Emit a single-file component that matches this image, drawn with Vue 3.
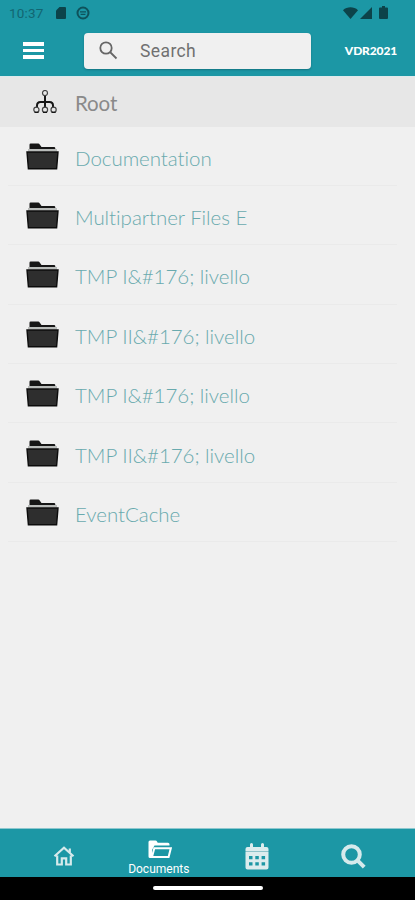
<template>
  <div class="screen">
    <header class="top">
      <div class="status">
        <span class="time">10:37</span>
        <svg class="sd" viewBox="0 0 10 12">
          <path d="M3.5 0H9a1 1 0 0 1 1 1v10a1 1 0 0 1-1 1H1a1 1 0 0 1-1-1V3.5z" />
        </svg>
        <svg class="sync" viewBox="0 0 14 14">
          <circle cx="7" cy="7" r="5.5" />
          <path d="M4 5.8h6M4.6 8.4h4.8" />
        </svg>
        <div class="signals">
          <svg width="15" height="12" viewBox="0 0 15 12">
            <path d="M7.5 12L0 3.2C4.2-.6 10.8-.6 15 3.2z" />
          </svg>
          <svg width="12" height="12" viewBox="0 0 12 12">
            <path d="M12 0v12H0z" />
          </svg>
          <svg class="battery" width="9" height="13" viewBox="0 0 9 13">
            <path d="M3 0h3v1.5h2a1 1 0 0 1 1 1V12a1 1 0 0 1-1 1H1a1 1 0 0 1-1-1V2.5a1 1 0 0 1 1-1h2z" />
          </svg>
        </div>
      </div>
      <div class="toolbar">
        <button class="menu" aria-label="Menu">
          <span></span>
          <span></span>
          <span></span>
        </button>
        <div class="search">
          <svg viewBox="0 0 19 19">
            <circle cx="7" cy="7" r="5.7" />
            <path d="M11 11l6.5 6.5" />
          </svg>
          <span>Search</span>
        </div>
        <span class="account">VDR2021</span>
      </div>
    </header>

    <main class="content">
      <div class="root">
        <svg viewBox="0 0 24 24">
          <path d="M12 5.5v12M4 17.500v-2q0-3.500 3.500-3.500h9q3.500 0 3.500 3.500v2" />
          <circle cx="12" cy="3" r="2.5" />
          <circle cx="3.4" cy="19.7" r="2.6" />
          <circle cx="12" cy="19.7" r="2.6" />
          <circle cx="20.6" cy="19.7" r="2.6" />
          <path class="base" d="M1.5 22.4h4M10 22.4h4M18.6 22.4h4" />
        </svg>
        <span>Root</span>
      </div>
      <ul class="folders">
        <li v-for="folder in folders" :key="folder.id">
          <svg viewBox="0 0 33 27">
            <path class="back" d="M3.5 6V1.7Q3.5.5 4.7.5h7.500q1 0 1.500 1l1.800 2.500h12.500q1.300 0 1.300 1.200V6z" />
            <path class="gap" d="M2 6h29v2.500H2z" />
            <path class="front" d="M1 9h31l-1.400 16.800H2.400z" />
          </svg>
          <span>{{ folder.name }}</span>
        </li>
      </ul>
    </main>

    <nav class="tabs">
      <a class="tab">
        <svg class="home" width="22" height="20" viewBox="0 0 22 20">
          <path d="M1.500 10.300L11 1.800l9.500 8.500M4.200 9.500v9h4.600v-6.200h4.400v6.200h4.600v-9" />
          <path d="M16.800 2.500v4" />
        </svg>
      </a>
      <a class="tab active">
        <svg width="24" height="19" viewBox="0 0 24 19">
          <path class="fill" d="M.5 2Q.5.500 2 .5h5.500q1 0 1.500 1l.7 1.200H20q1.500 0 1.500 1.500v1.300H6.500L4 10v8H2Q.5 18 .5 16.500z" />
          <path d="M6.300 8.300h16.500l-2.200 8.700H4z" />
        </svg>
        <span>Documents</span>
      </a>
      <a class="tab">
        <svg width="24" height="27" viewBox="0 0 24 27">
          <path
            class="fill"
            fill-rule="evenodd"
            d="M5 4V1.500a1.500 1.500 0 0 1 3 0V4h8V1.500a1.500 1.500 0 0 1 3 0V4h2.500Q23.500 4 23.500 6v2H.5V6q0-2 2-2zM.5 9h23v15.500q0 2-2 2h-19q-2 0-2-2zM4 13v3.200h3.500V13zm6.300 0v3.200h3.500V13zm6.300 0v3.200h3.500V13zM4 19.300v3.200h3.500v-3.200zm6.300 0v3.200h3.500v-3.200zm6.300 0v3.200h3.500v-3.200z"
          />
          <path class="rule" d="M.5 8.500h23" />
        </svg>
      </a>
      <a class="tab">
        <svg class="find" width="25" height="25" viewBox="0 0 25 25">
          <circle cx="10.500" cy="10.500" r="8.300" />
          <path d="M16.700 16.700l6.500 6.500" />
        </svg>
      </a>
    </nav>
    <div class="system"><span></span></div>
  </div>
</template>

<script setup>
const names = [
  'Documentation',
  'Multipartner Files E',
  'TMP I&#176; livello',
  'TMP II&#176; livello',
  'TMP I&#176; livello',
  'TMP II&#176; livello',
  'EventCache',
];
const folders = names.map((name, id) => ({ id, name }));
</script>

<style>
body {
  background: #f0f0f0;
}
</style>

<style scoped>
.screen {
  display: flex;
  flex-direction: column;
  height: 900px;
  overflow: hidden;
  background: #f0f0f0;
  font-family: Roboto, sans-serif;
}
svg {
  display: block;
  flex: none;
}
.top {
  height: 76px;
  background: #1c97a5;
}
.status {
  display: flex;
  align-items: center;
  height: 25px;
  padding: 0 27px 0 9px;
  box-sizing: border-box;
  color: #126672;
  fill: #0c434a;
}
.time {
  width: 47px;
  padding-top: 1px;
  font-size: 13.5px;
  letter-spacing: 0.2px;
}
.sd {
  width: 10px;
  height: 12px;
}
.sync {
  width: 14px;
  height: 14px;
  margin-left: 10px;
  fill: none;
  stroke: #0e525b;
  stroke-width: 2;
}
.sync path {
  stroke-width: 1.2;
}
.signals {
  display: flex;
  align-items: center;
  gap: 2px;
  margin-left: auto;
}
.battery {
  margin-left: 5px;
}
.toolbar {
  display: flex;
  align-items: center;
  height: 51px;
  padding: 0 18px 0 23px;
}
.menu {
  display: flex;
  flex-direction: column;
  gap: 3px;
  width: 21px;
  margin-right: 39.5px;
  padding: 0;
  border: 0;
  background: none;
}
.menu span {
  height: 3.4px;
  background: #fff;
}
.search {
  display: flex;
  align-items: center;
  width: 227px;
  height: 36px;
  padding-left: 15px;
  box-sizing: border-box;
  border-radius: 4px;
  background: #f0f0f0;
  box-shadow: 0 1px 2px rgba(0, 50, 60, 0.35);
  color: #707070;
  font-size: 17.5px;
  letter-spacing: 0.4px;
}
.search svg {
  width: 19px;
  height: 19px;
  margin-right: 22.5px;
  fill: none;
  stroke: #666;
  stroke-width: 1.8;
}
.account {
  margin-left: auto;
  color: #fff;
  font-family: Lato, sans-serif;
  font-size: 12px;
  font-weight: 900;
  letter-spacing: -0.15px;
}
.content {
  flex: 1;
  border-top: 1px solid #dceaec;
}
.root {
  display: flex;
  align-items: center;
  height: 49.5px;
  padding: 0 0 0 33px;
  background: #e7e7e7;
  color: #8a8a8a;
  font-family: Lato, sans-serif;
  font-size: 20.5px;
  letter-spacing: -0.1px;
}
.root svg {
  width: 24px;
  height: 24px;
  margin-right: 18px;
  fill: none;
  stroke: #161616;
  stroke-width: 2;
}
.root circle {
  stroke: #444;
  stroke-width: 1.2;
}
.root .base {
  stroke-width: 1.3;
}
.root span {
  padding-top: 3px;
}
.folders {
  margin: 0;
  padding: 0 18px 0 8px;
  list-style: none;
}
.folders li {
  display: flex;
  align-items: center;
  height: 59.4px;
  padding-left: 18px;
  box-sizing: border-box;
  border-bottom: 1px solid #eaeaea;
  color: #69aaae;
  font-family: Lato, sans-serif;
  font-size: 20.5px;
  font-weight: 300;
  font-variant-ligatures: none;
  letter-spacing: -0.04px;
}
.folders svg {
  width: 33px;
  height: 27px;
  margin-top: 1px;
  margin-right: 16px;
}
.folders span {
  padding-top: 4px;
}
.back {
  fill: #161616;
}
.gap {
  fill: #b9bcba;
}
.front {
  fill: #2e2e2e;
  stroke: #0c0c0c;
  stroke-width: 1.4;
}
.tabs {
  display: grid;
  grid-template-columns: repeat(4, 96.5px);
  justify-content: center;
  height: 49px;
  padding-left: 2px;
  border-top: 1px solid #8ec8cf;
  box-sizing: border-box;
  background: #1c97a5;
}
.tab {
  display: flex;
  flex-direction: column;
  align-items: center;
  justify-content: center;
  padding-top: 6px;
  color: #fff;
  fill: none;
  stroke: #d6eaec;
}
.home {
  stroke-width: 2.2;
}
.tab .fill {
  fill: #dcecee;
  stroke: none;
}
.rule {
  stroke: #8fc3ca;
}
.find {
  stroke-width: 4;
}
.active {
  justify-content: flex-start;
  padding-top: 11px;
  stroke: #fff;
  stroke-width: 2;
}
.active .fill {
  fill: #fff;
}
.active span {
  margin-top: 3px;
  margin-right: 3px;
  font-size: 12px;
  line-height: 14px;
}
.system {
  display: flex;
  justify-content: center;
  height: 23px;
  background: #000;
}
.system span {
  width: 110px;
  height: 4px;
  margin-top: 9px;
  border-radius: 2px;
  background: #fff;
}
</style>
